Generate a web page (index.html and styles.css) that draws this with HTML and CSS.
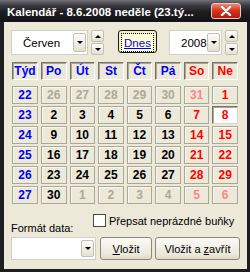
FILE: index.html
```html
<!DOCTYPE html>
<html lang="cs">
<head>
    <meta charset="UTF-8">
    <title>Kalendář</title>
    <link rel="stylesheet" href="styles.css">
</head>
<body>
    <div class="window">
        <div class="titlebar">
            <span class="title">Kalendář - 8.6.2008 neděle (23.tý...</span>
            <span class="close">
                <svg width="12" height="10" viewBox="0 0 12 10"><path d="M2 1 L10 9 M10 1 L2 9" stroke="#fff" stroke-width="2.4" stroke-linecap="round"/></svg>
            </span>
        </div>

        <div class="client">
            <div class="toolbar">
                <div class="combo month"><span class="combo-text">Červen</span><span class="drop"><i class="tri-down"></i></span></div>
                <div class="spin"><span class="spin-btn"><i class="tri-up"></i></span><span class="spin-btn"><i class="tri-down"></i></span></div>
                <button class="btn today-btn"><span class="focus">Dnes</span></button>
                <div class="combo year"><span class="combo-text">2008</span><span class="drop"><i class="tri-down"></i></span></div>
                <div class="spin"><span class="spin-btn"><i class="tri-up"></i></span><span class="spin-btn"><i class="tri-down"></i></span></div>
            </div>

            <div class="cal-head">
                <div class="hd">Týd</div>
                <div class="hd">Po</div>
                <div class="hd">Út</div>
                <div class="hd">St</div>
                <div class="hd">Čt</div>
                <div class="hd">Pá</div>
                <div class="hd we">So</div>
                <div class="hd we">Ne</div>
            </div>

            <div class="cal-body">
                <div class="day week">22</div>
                <div class="day other">26</div>
                <div class="day other">27</div>
                <div class="day other">28</div>
                <div class="day other">29</div>
                <div class="day other">30</div>
                <div class="day other we">31</div>
                <div class="day we">1</div>

                <div class="day week">23</div>
                <div class="day">2</div>
                <div class="day">3</div>
                <div class="day">4</div>
                <div class="day">5</div>
                <div class="day">6</div>
                <div class="day we">7</div>
                <div class="day we current">8</div>

                <div class="day week">24</div>
                <div class="day">9</div>
                <div class="day">10</div>
                <div class="day">11</div>
                <div class="day">12</div>
                <div class="day">13</div>
                <div class="day we">14</div>
                <div class="day we">15</div>

                <div class="day week">25</div>
                <div class="day">16</div>
                <div class="day">17</div>
                <div class="day">18</div>
                <div class="day">19</div>
                <div class="day">20</div>
                <div class="day we">21</div>
                <div class="day we">22</div>

                <div class="day week">26</div>
                <div class="day">23</div>
                <div class="day">24</div>
                <div class="day">25</div>
                <div class="day">26</div>
                <div class="day">27</div>
                <div class="day we">28</div>
                <div class="day we">29</div>

                <div class="day week">27</div>
                <div class="day">30</div>
                <div class="day other">1</div>
                <div class="day other">2</div>
                <div class="day other">3</div>
                <div class="day other">4</div>
                <div class="day other we">5</div>
                <div class="day other we">6</div>
            </div>

            <label class="overwrite"><span class="checkbox"></span>Přepsat neprázdné buňky</label>
            <div class="format-label">Formát data:</div>

            <div class="actions">
                <div class="combo format"><span class="combo-text"></span><span class="drop"><i class="tri-down"></i></span></div>
                <button class="btn insert"><u>V</u>ložit</button>
                <button class="btn insert-close">Vložit a <u>z</u>avřít</button>
            </div>
        </div>
    </div>
</body>
</html>
```

FILE: styles.css
```css
body {
    margin: 0;
    font-family: "Liberation Sans", Arial, sans-serif;
    font-size: 11px;
    color: #000;
    background-color: #1b1b20;
}

.window {
    width: 250px;
    height: 272px;
    display: flex;
    flex-direction: column;
    background-color: #1d1d22;
}

/* title bar */
.titlebar {
    height: 22px;
    flex: none;
    display: flex;
    align-items: center;
    padding-left: 7px;
    background: linear-gradient(#707076 0, #3a3a40 25%, #1c1c21 55%, #141418 100%);
}

.title {
    white-space: nowrap;
    color: #fff;
    font-weight: bold;
    font-size: 11.5px;
    padding-top: 1px;
}

.close {
    width: 30px;
    height: 16px;
    margin: 0 9px 0 auto;
    box-sizing: border-box;
    display: flex;
    align-items: center;
    justify-content: center;
    border: 1px solid #e9c7c2;
    border-radius: 3px;
    background: linear-gradient(#ee8a74 0, #d6371f 45%, #b51a08 100%);
}

/* client area */
.client {
    flex: 1;
    margin: 0 3px 3px 4px;
    padding: 8px 0 0 7px;
    background-color: #ece9d8;
}

.toolbar {
    display: flex;
    align-items: flex-start;
    height: 25px;
}

.combo {
    box-sizing: border-box;
    height: 25px;
    display: flex;
    align-items: stretch;
    padding: 2px 1px 2px 0;
    border: 1px solid #d3d0c3;
    background-color: #fff;
}

.combo-text {
    flex: 1;
    display: flex;
    align-items: center;
    padding-left: 11px;
    font-size: 11.5px;
}

.month {
    width: 77px;
}

.year {
    width: 53px;
    margin-left: 12px;
}

.drop {
    width: 13px;
    box-sizing: border-box;
    display: flex;
    align-items: center;
    justify-content: center;
    border: 1px solid #c3c0b3;
    border-radius: 2px;
    background: linear-gradient(#fdfcf8, #e4e1d3);
}

.spin {
    width: 13px;
    height: 25px;
    margin-left: 3px;
    display: flex;
    flex-direction: column;
    gap: 1px;
}

.spin-btn {
    flex: 1;
    display: flex;
    align-items: center;
    justify-content: center;
    border: 1px solid #c3c0b3;
    border-radius: 2px;
    background: linear-gradient(#fdfcf8, #e4e1d3);
}

.tri-up,
.tri-down {
    width: 0;
    height: 0;
    border-left: 3px solid transparent;
    border-right: 3px solid transparent;
}

.tri-up {
    border-bottom: 3px solid #000;
}

.tri-down {
    border-top: 3px solid #000;
}

/* buttons */
.btn {
    box-sizing: border-box;
    height: 23px;
    padding: 0;
    font-family: inherit;
    font-size: 11px;
    color: #000;
    border: 1px solid #8a887e;
    border-radius: 3px;
    background: linear-gradient(#fbfaf6, #ebe8db 80%, #dcd8c7);
}

.today-btn {
    width: 39px;
    margin-left: 14px;
    padding: 2px;
    border-color: #1a1a1a;
    background: #f4ecc4;
}

.today-btn .focus {
    display: flex;
    align-items: center;
    justify-content: center;
    height: 100%;
    border: 1px dotted #000;
    background-color: #ffffd6;
    color: #0000ff;
    font-size: 11.5px;
    text-decoration: underline;
}

/* calendar */
.cal-head,
.cal-body {
    display: grid;
    grid-template-columns: 26px repeat(7, 1fr);
    column-gap: 3px;
    width: 226px;
    margin-left: 1px;
}

.cal-head {
    margin-top: 7px;
    margin-bottom: 6px;
}

.cal-body {
    row-gap: 2px;
}

.hd,
.day {
    box-sizing: border-box;
    height: 18px;
    line-height: 16px;
    text-align: center;
    font-weight: bold;
    font-size: 12px;
}

.hd {
    color: #0000ff;
    border: 1px solid;
    border-color: #767468 #fff #fff #767468;
    box-shadow: inset 1px 1px #aca899;
}

.day {
    border: 1px solid #aca899;
    box-shadow: inset 1px 1px #f7f6f1;
}

.week {
    color: #0000ff;
}

.we {
    color: #ff0000;
}

.other {
    color: #aca899;
}

.other.we {
    color: #ff8585;
}

.day.current {
    background-color: #fff;
    border-color: #767468 #dcd9cc #dcd9cc #767468;
    box-shadow: inset 1px 1px #aca899;
}

/* bottom options */
.overwrite {
    display: flex;
    align-items: center;
    height: 13px;
    margin: 10px 0 0 82px;
}

.checkbox {
    width: 13px;
    height: 13px;
    box-sizing: border-box;
    margin-right: 3px;
    border: 1px solid #4a4a4a;
    background-color: #fff;
}

.format-label {
    margin-top: -5px;
    line-height: 13px;
}

.actions {
    display: flex;
    margin-top: 2px;
}

.format {
    width: 85px;
    height: 23px;
}

.insert {
    width: 52px;
    margin-left: 4px;
}

.insert-close {
    width: 85px;
    margin-left: 3px;
}
```
